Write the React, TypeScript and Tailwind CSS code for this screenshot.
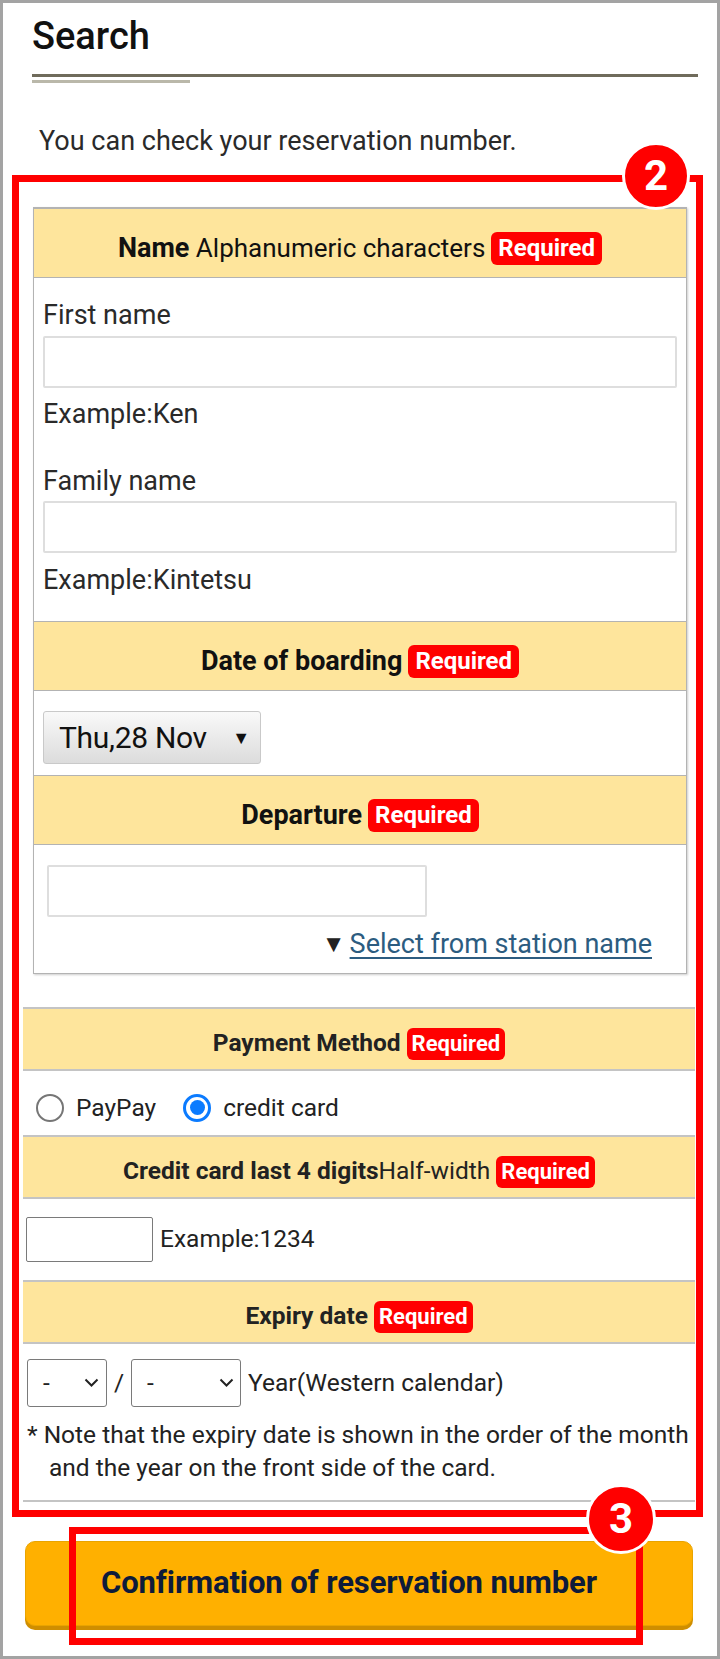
import React from "react";

const Badge = ({ small = false }: { small?: boolean }) => (
  <span
    className={
      small
        ? "inline-flex items-center h-[32px] px-[5px] ml-[6px] rounded-[6px] bg-[#ff0000] text-white text-[22px] font-bold leading-none"
        : "inline-flex items-center h-[33px] px-[7px] ml-[6px] rounded-[6px] bg-[#ff0000] text-white text-[24px] font-bold leading-none"
    }
  >
    Required
  </span>
);

const Chevron = () => (
  <svg width="15" height="10" viewBox="0 0 15 10" className="shrink-0">
    <path d="M1.5 1.5 L7.5 7.5 L13.5 1.5" fill="none" stroke="#222" strokeWidth="2" />
  </svg>
);

const Radio = ({ checked, label }: { checked?: boolean; label: string }) => (
  <label className="flex items-center">
    {checked ? (
      <span className="w-[28px] h-[28px] rounded-full border-[3px] border-[#0b7bff] flex items-center justify-center">
        <span className="w-[15px] h-[15px] rounded-full bg-[#0b7bff]" />
      </span>
    ) : (
      <span className="w-[28px] h-[28px] rounded-full border-2 border-[#767676]" />
    )}
    <span className="ml-[12px] text-[24.5px] leading-[32px] text-[#222]">{label}</span>
  </label>
);

const UpperHead = ({ children }: { children: React.ReactNode }) => (
  <div className="h-[70px] pt-[10px] bg-[#fee59c] border-y border-[#b3b3b3] flex items-center justify-center text-[26px] text-[#111]">
    {children}
  </div>
);

const LowerHead = ({ children }: { children: React.ReactNode }) => (
  <div className="h-[64px] pt-[9px] bg-[#fee59c] border-y-2 border-[#c4c4c4] flex items-center justify-center text-[24.5px] text-[#222]">
    {children}
  </div>
);

export default function App() {
  return (
    <div className="relative w-[720px] h-[1659px] border-[3px] border-[#a3a3a3] bg-white overflow-hidden font-['Roboto','Noto_Sans',sans-serif] text-[#222]">
      {/* heading */}
      <div className="pl-[29px] pr-[19px] pt-[11px]">
        <h1 className="text-[38px] leading-[44px] font-medium text-[#111]">Search</h1>
        <div className="mt-[16px] h-[3px] bg-[#6f6b5b]" />
        <div className="mt-[3px] h-[3px] w-[158px] bg-[#bab8aa]" />
      </div>

      <p className="mt-[42px] ml-[36px] text-[27px] leading-[32px] text-[#2a2a2a]">
        You can check your reservation number.
      </p>

      {/* upper form box */}
      <div className="mt-[50px] ml-[30px] w-[654px] border border-[#b3b3b3] shadow-[1px_1px_2px_rgba(0,0,0,0.2)]">
        <UpperHead>
          <span className="font-bold text-[27px]">Name</span>
          <span>&nbsp;Alphanumeric characters</span>
          <Badge />
        </UpperHead>
        <div className="px-[9px] pt-[21px] pb-[25px] text-[27px] leading-[32px] text-[#2a2a2a]">
          <div>First name</div>
          <div className="mt-[5px] h-[52px] border-2 border-[#dedede] rounded-[2px]" />
          <div className="mt-[10px]">Example:Ken</div>
          <div className="mt-[35px]">Family name</div>
          <div className="mt-[4px] h-[52px] border-2 border-[#dedede] rounded-[2px]" />
          <div className="mt-[11px]">Example:Kintetsu</div>
        </div>

        <UpperHead>
          <span className="font-bold text-[27px]">Date of boarding</span>
          <Badge />
        </UpperHead>
        <div className="px-[9px] pt-[20px] pb-[11px]">
          <div className="w-[218px] h-[53px] border border-[#c9c9c9] rounded-[3px] bg-gradient-to-b from-[#f9f9f9] to-[#dcdcdc] flex items-center pl-[15px] pr-[10px]">
            <span className="text-[30px] text-[#111] flex-1 tracking-[-0.3px]">Thu,28 Nov</span>
            <span className="text-[18px] text-[#111]">▼</span>
          </div>
        </div>

        <UpperHead>
          <span className="font-bold text-[27px]">Departure</span>
          <Badge />
        </UpperHead>
        <div className="pl-[13px] pr-[34px] pt-[20px] pb-[13px]">
          <div className="w-[380px] h-[52px] border-2 border-[#dedede] rounded-[2px]" />
          <div className="mt-[11px] flex justify-end items-center text-[27px] leading-[32px]">
            <span className="text-[24px] text-[#222] mr-[4px] leading-none">▼</span>
            <span className="text-[#2c5c80] underline underline-offset-4">Select from station name</span>
          </div>
        </div>
      </div>

      {/* lower form */}
      <div className="mt-[33px] ml-[20px] w-[672px] text-[24.5px] text-[#222]">
        <LowerHead>
          <span className="font-bold">Payment Method</span>
          <Badge small />
        </LowerHead>
        <div className="h-[64px] flex items-center pl-[13px] pt-[9px] gap-[27px]">
          <Radio label="PayPay" />
          <Radio checked label="credit card" />
        </div>

        <LowerHead>
          <span className="font-bold">Credit card last 4 digits</span>
          <span>Half-width</span>
          <Badge small />
        </LowerHead>
        <div className="h-[81px] flex items-center pl-[3px]">
          <div className="w-[127px] h-[45px] border border-[#7a7a7a] rounded-[2px]" />
          <span className="ml-[7px]">Example:1234</span>
        </div>

        <LowerHead>
          <span className="font-bold">Expiry date</span>
          <Badge small />
        </LowerHead>
        <div className="pt-[15px] pl-[4px] pb-[16px] border-b-2 border-[#c4c4c4]">
          <div className="flex items-center">
            <div className="w-[80px] h-[48px] border border-[#7a7a7a] rounded-[3px] flex items-center pl-[15px] pr-[7px]">
              <span className="flex-1">-</span>
              <Chevron />
            </div>
            <span className="mx-[7px]">/</span>
            <div className="w-[110px] h-[48px] border border-[#7a7a7a] rounded-[3px] flex items-center pl-[15px] pr-[6px]">
              <span className="flex-1">-</span>
              <Chevron />
            </div>
            <span className="ml-[7px]">Year(Western calendar)</span>
          </div>
          <p className="mt-[11px] pl-[22px] -indent-[22px] leading-[33px] pr-[2px]">
            * Note that the expiry date is shown in the order of the month and the year on the front side of the card.
          </p>
        </div>
      </div>

      {/* submit button */}
      <div className="mt-[39px] ml-[22px] w-[668px] h-[85px] rounded-[10px] bg-[#ffb000] border border-[#e9a400] shadow-[0_4px_0_#cf8e00] flex items-center justify-center">
        <span className="text-[31px] font-bold text-[#0e1b3a] -ml-[20px] tracking-[-0.1px]">Confirmation of reservation number</span>
      </div>

      {/* annotation overlays */}
      <div className="absolute left-[9px] top-[172px] w-[691px] h-[1342px] border-[7px] border-[#ff0000]" />
      <div className="absolute left-[66px] top-[1524px] w-[574px] h-[118px] border-[7px] border-[#ff0000]" />
      <div className="absolute left-[619px] top-[139px] w-[68px] h-[68px] rounded-full bg-[#ff0000] border-[3px] border-white flex items-center justify-center text-white text-[42px] font-bold leading-none">
        2
      </div>
      <div className="absolute left-[583px] top-[1481px] w-[70px] h-[70px] rounded-full bg-[#ff0000] border-[3px] border-white flex items-center justify-center text-white text-[42px] font-bold leading-none">
        3
      </div>
    </div>
  );
}
